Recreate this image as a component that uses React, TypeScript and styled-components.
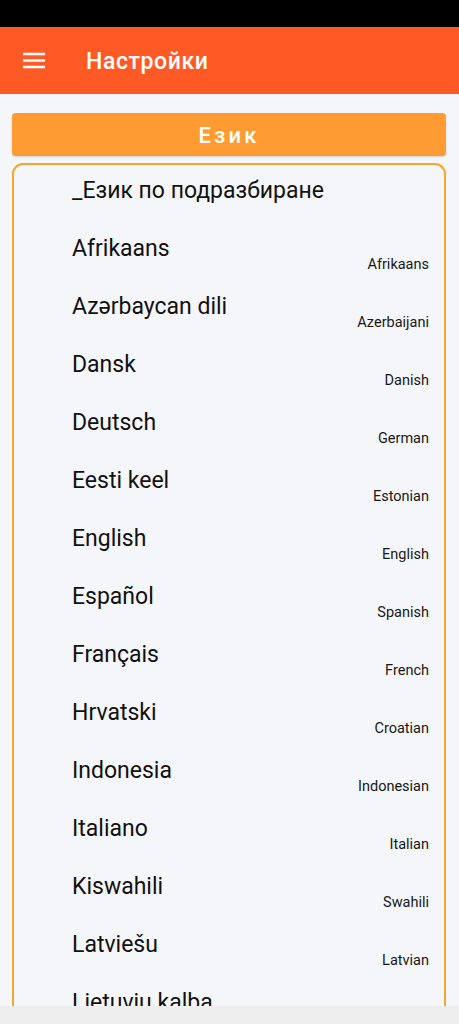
import React from "react";
import styled, { createGlobalStyle } from "styled-components";

const GlobalStyle = createGlobalStyle`
  html, body { margin: 0; padding: 0; }
  body { font-family: Roboto, "Noto Sans", Arial, sans-serif; background: #f5f6fa; }
`;

const Screen = styled.div`
  width: 459px;
  height: 1024px;
  display: flex;
  flex-direction: column;
  overflow: hidden;
  background: #f5f6fa;
`;

const StatusBar = styled.div`
  height: 27px;
  flex: none;
  background: #000;
`;

const Toolbar = styled.header`
  height: 67px;
  flex: none;
  background: #ff5a26;
  display: flex;
  align-items: center;
  padding-left: 22px;
  gap: 40px;
  color: #fff;
`;

const Title = styled.h1`
  margin: 2px 0 0;
  font-size: 23px;
  font-weight: 500;
  letter-spacing: 0.6px;
`;

const Content = styled.main`
  flex: 1;
  min-height: 0;
  display: flex;
  flex-direction: column;
  gap: 7px;
  padding: 19px 13px 0 12px;
`;

const SectionButton = styled.button`
  height: 43px;
  flex: none;
  border: none;
  border-radius: 4px;
  padding-top: 3px;
  background: #ff9b33;
  color: #fff;
  font-family: Roboto, Arial, sans-serif;
  font-size: 22px;
  font-weight: 500;
  letter-spacing: 3.2px;
  box-shadow: 0 1px 2px rgba(0, 0, 0, 0.15);
`;

const ListBox = styled.div`
  flex: 1;
  min-height: 0;
  overflow: hidden;
  border: 2px solid #f2a82a;
  border-bottom: none;
  border-radius: 11px 11px 0 0;
`;

const Row = styled.div`
  height: 58px;
  box-sizing: border-box;
  padding: 12px 15px 0 58px;
  display: flex;
  flex-direction: column;
`;

const Name = styled.div`
  font-size: 23px;
  line-height: 28px;
  color: #111;
`;

const Sub = styled.div`
  margin-top: -6px;
  align-self: flex-end;
  font-size: 14.5px;
  line-height: 16px;
  color: #181818;
`;

const NavBar = styled.div`
  height: 18px;
  flex: none;
  background: #eeeeef;
`;

const MenuIcon = () => (
  <svg width="24" height="24" viewBox="0 0 24 24">
    <path d="M1 5h22M1 11.5h22M1 18h22" stroke="#fff" strokeWidth="2.4" />
  </svg>
);

const languages: [string, string][] = [
  ["_Език по подразбиране", ""],
  ["Afrikaans", "Afrikaans"],
  ["Azərbaycan dili", "Azerbaijani"],
  ["Dansk", "Danish"],
  ["Deutsch", "German"],
  ["Eesti keel", "Estonian"],
  ["English", "English"],
  ["Español", "Spanish"],
  ["Français", "French"],
  ["Hrvatski", "Croatian"],
  ["Indonesia", "Indonesian"],
  ["Italiano", "Italian"],
  ["Kiswahili", "Swahili"],
  ["Latviešu", "Latvian"],
  ["Lietuvių kalba", ""],
];

export default function App() {
  return (
    <Screen>
      <GlobalStyle />
      <StatusBar />
      <Toolbar>
        <MenuIcon />
        <Title>Настройки</Title>
      </Toolbar>
      <Content>
        <SectionButton>Език</SectionButton>
        <ListBox>
          {languages.map(([name, sub]) => (
            <Row key={name}>
              <Name>{name}</Name>
              {sub && <Sub>{sub}</Sub>}
            </Row>
          ))}
        </ListBox>
      </Content>
      <NavBar />
    </Screen>
  );
}
